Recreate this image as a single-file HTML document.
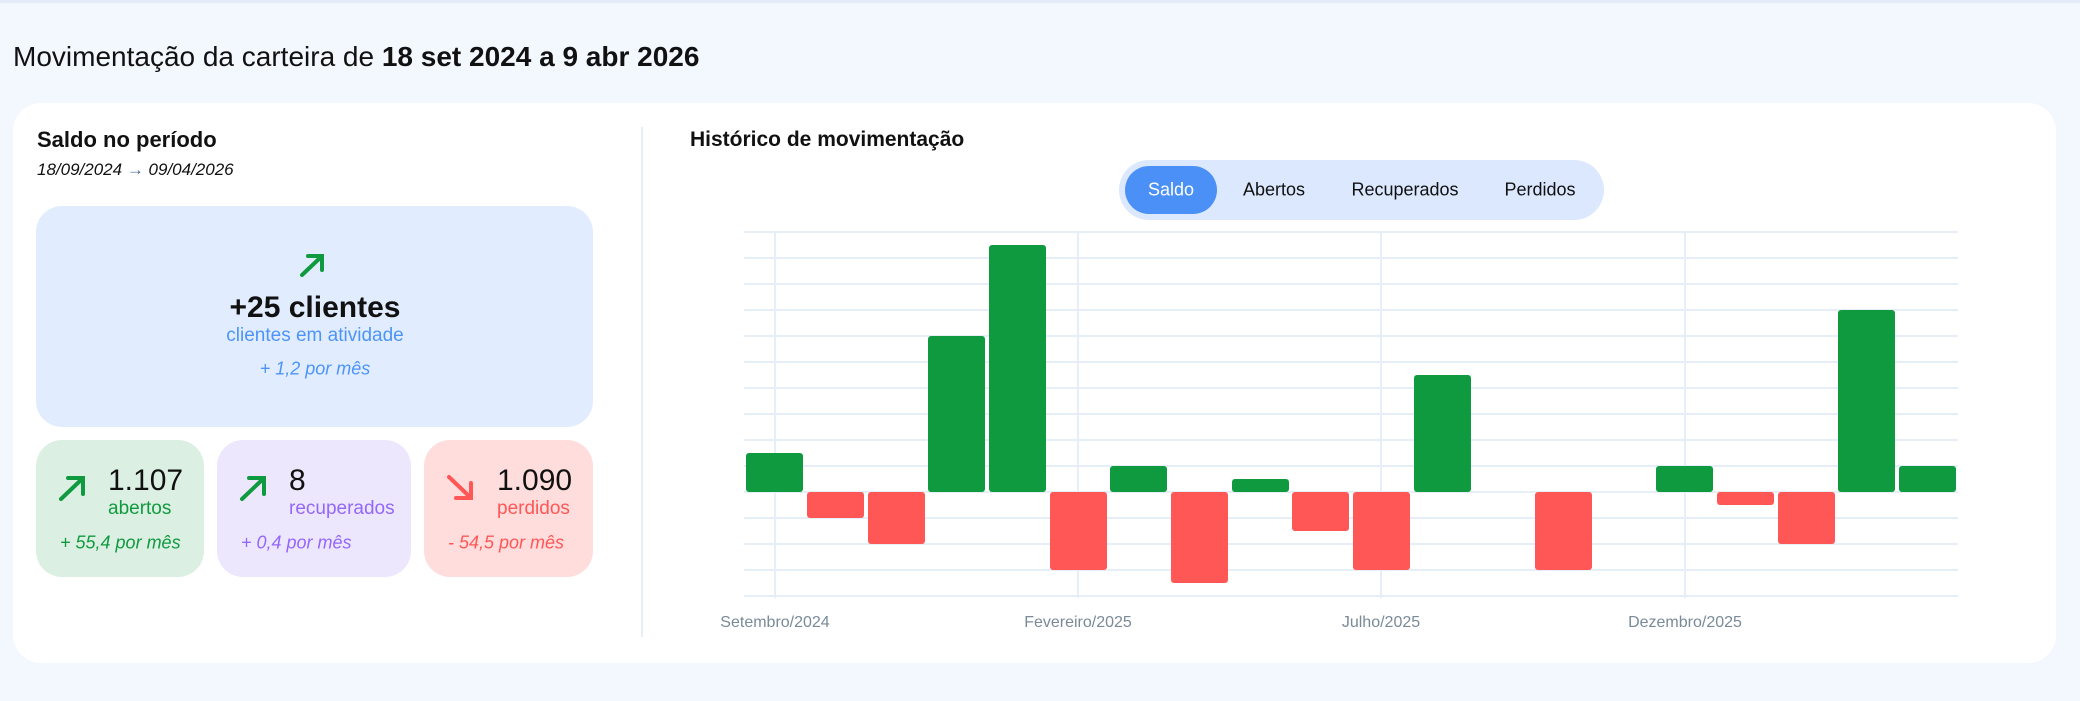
<!DOCTYPE html>
<html><head><meta charset="utf-8">
<style>
*{margin:0;padding:0;box-sizing:border-box}
body{width:2080px;height:701px;background:#f3f7fe;font-family:"Liberation Sans",sans-serif;position:relative;overflow:hidden;color:#111}
.a{position:absolute;white-space:nowrap}
.c{transform:translate(-50%,-50%)}
.v{transform:translateY(-50%)}
.box{position:absolute;border-radius:26px}
.bar{position:absolute;width:57px;border-radius:3px}
.g{background:#109a3f}.r{background:#ff5656}
.hl{position:absolute;left:744px;width:1214px;height:2px;background:#e6eef8}
.vl{position:absolute;top:232px;height:366px;width:2px;background:#e6eef8}
.xl{position:absolute;top:623px;transform:translate(-50%,-50%);color:#7a8a99;font-size:16px;white-space:nowrap}
</style></head><body>
<div class="a" style="left:0;top:0;width:2080px;height:3px;background:#e3ecf8"></div>
<div class="a v" style="left:13px;top:57px;font-size:28px">Movimentação da carteira de <b>18 set 2024 a 9 abr 2026</b></div>
<div class="a" style="left:13px;top:103px;width:2043px;height:560px;background:#fff;border-radius:28px"></div>
<div class="a v" style="left:37px;top:140px;font-size:22px;font-weight:bold">Saldo no período</div>
<div class="a v" style="left:37px;top:170px;font-size:17px;font-style:italic">18/09/2024 <span style="color:#4a6a90">→</span> 09/04/2026</div>

<div class="box" style="left:36px;top:206px;width:557px;height:221px;background:#e1edfe"></div>
<svg class="a" style="left:299px;top:252px" width="28" height="26" viewBox="0 0 28 26"><path d="M3 23 L22 5 M9 4 H23 V18" stroke="#109a3f" stroke-width="4" fill="none" stroke-linecap="round"/></svg>
<div class="a c" style="left:315px;top:308px;font-size:30px;font-weight:bold">+25 clientes</div>
<div class="a c" style="left:315px;top:336px;font-size:19px;color:#4d94f8">clientes em atividade</div>
<div class="a c" style="left:315px;top:369px;font-size:18px;font-style:italic;color:#4d94f8">+ 1,2 por mês</div>

<div class="box" style="left:36px;top:440px;width:168px;height:137px;background:#dcefe3"></div>
<svg class="a" style="left:58px;top:474px" width="28" height="28" viewBox="0 0 28 28"><path d="M3 25 L24 5 M10 4 H25 V20" stroke="#109a3f" stroke-width="4" fill="none" stroke-linecap="round"/></svg>
<div class="a v" style="left:108px;top:481px;font-size:30px">1.107</div>
<div class="a v" style="left:108px;top:509px;font-size:19px;color:#109a3f">abertos</div>
<div class="a v" style="left:60px;top:543px;font-size:18px;font-style:italic;color:#109a3f">+ 55,4 por mês</div>

<div class="box" style="left:217px;top:440px;width:194px;height:137px;background:#ede7fe"></div>
<svg class="a" style="left:239px;top:474px" width="28" height="28" viewBox="0 0 28 28"><path d="M3 25 L24 5 M10 4 H25 V20" stroke="#109a3f" stroke-width="4" fill="none" stroke-linecap="round"/></svg>
<div class="a v" style="left:289px;top:481px;font-size:30px">8</div>
<div class="a v" style="left:289px;top:509px;font-size:19px;color:#9467fa">recuperados</div>
<div class="a v" style="left:241px;top:543px;font-size:18px;font-style:italic;color:#9467fa">+ 0,4 por mês</div>

<div class="box" style="left:424px;top:440px;width:169px;height:137px;background:#ffdddd"></div>
<svg class="a" style="left:446px;top:474px" width="28" height="28" viewBox="0 0 28 28"><path d="M3 3 L24 23 M25 9 V24 H10" stroke="#ff5656" stroke-width="4" fill="none" stroke-linecap="round"/></svg>
<div class="a v" style="left:497px;top:481px;font-size:30px">1.090</div>
<div class="a v" style="left:497px;top:509px;font-size:19px;color:#ff5656">perdidos</div>
<div class="a v" style="left:448px;top:543px;font-size:18px;font-style:italic;color:#ff5656">- 54,5 por mês</div>

<div class="a" style="left:641px;top:127px;width:2px;height:510px;background:#e8eef6"></div>

<div class="a v" style="left:690px;top:140px;font-size:21px;font-weight:bold">Histórico de movimentação</div>
<div class="a" style="left:1119px;top:160px;width:485px;height:60px;border-radius:30px;background:#dbe8fd"></div>
<div class="a" style="left:1125px;top:166px;width:92px;height:48px;border-radius:24px;background:#4a90f7"></div>
<div class="a c" style="left:1171px;top:190px;font-size:18px;color:#fff">Saldo</div>
<div class="a c" style="left:1274px;top:190px;font-size:18px">Abertos</div>
<div class="a c" style="left:1405px;top:190px;font-size:18px">Recuperados</div>
<div class="a c" style="left:1540px;top:190px;font-size:18px">Perdidos</div>

<div class="hl" style="top:231px"></div><div class="hl" style="top:257px"></div><div class="hl" style="top:283px"></div><div class="hl" style="top:309px"></div><div class="hl" style="top:335px"></div><div class="hl" style="top:361px"></div><div class="hl" style="top:387px"></div><div class="hl" style="top:413px"></div><div class="hl" style="top:439px"></div><div class="hl" style="top:465px"></div><div class="hl" style="top:491px"></div><div class="hl" style="top:517px"></div><div class="hl" style="top:543px"></div><div class="hl" style="top:569px"></div><div class="hl" style="top:595px"></div>
<div class="vl" style="left:774px"></div><div class="vl" style="left:1077px"></div><div class="vl" style="left:1380px"></div><div class="vl" style="left:1684px"></div>

<div class="bar g" style="left:746px;top:453px;height:39px"></div>
<div class="bar r" style="left:807px;top:492px;height:26px"></div>
<div class="bar r" style="left:868px;top:492px;height:52px"></div>
<div class="bar g" style="left:928px;top:336px;height:156px"></div>
<div class="bar g" style="left:989px;top:245px;height:247px"></div>
<div class="bar r" style="left:1050px;top:492px;height:78px"></div>
<div class="bar g" style="left:1110px;top:466px;height:26px"></div>
<div class="bar r" style="left:1171px;top:492px;height:91px"></div>
<div class="bar g" style="left:1232px;top:479px;height:13px"></div>
<div class="bar r" style="left:1292px;top:492px;height:39px"></div>
<div class="bar r" style="left:1353px;top:492px;height:78px"></div>
<div class="bar g" style="left:1414px;top:375px;height:117px"></div>
<div class="bar r" style="left:1535px;top:492px;height:78px"></div>
<div class="bar g" style="left:1656px;top:466px;height:26px"></div>
<div class="bar r" style="left:1717px;top:492px;height:13px"></div>
<div class="bar r" style="left:1778px;top:492px;height:52px"></div>
<div class="bar g" style="left:1838px;top:310px;height:182px"></div>
<div class="bar g" style="left:1899px;top:466px;height:26px"></div>

<div class="xl" style="left:775px">Setembro/2024</div>
<div class="xl" style="left:1078px">Fevereiro/2025</div>
<div class="xl" style="left:1381px">Julho/2025</div>
<div class="xl" style="left:1685px">Dezembro/2025</div>
</body></html>
